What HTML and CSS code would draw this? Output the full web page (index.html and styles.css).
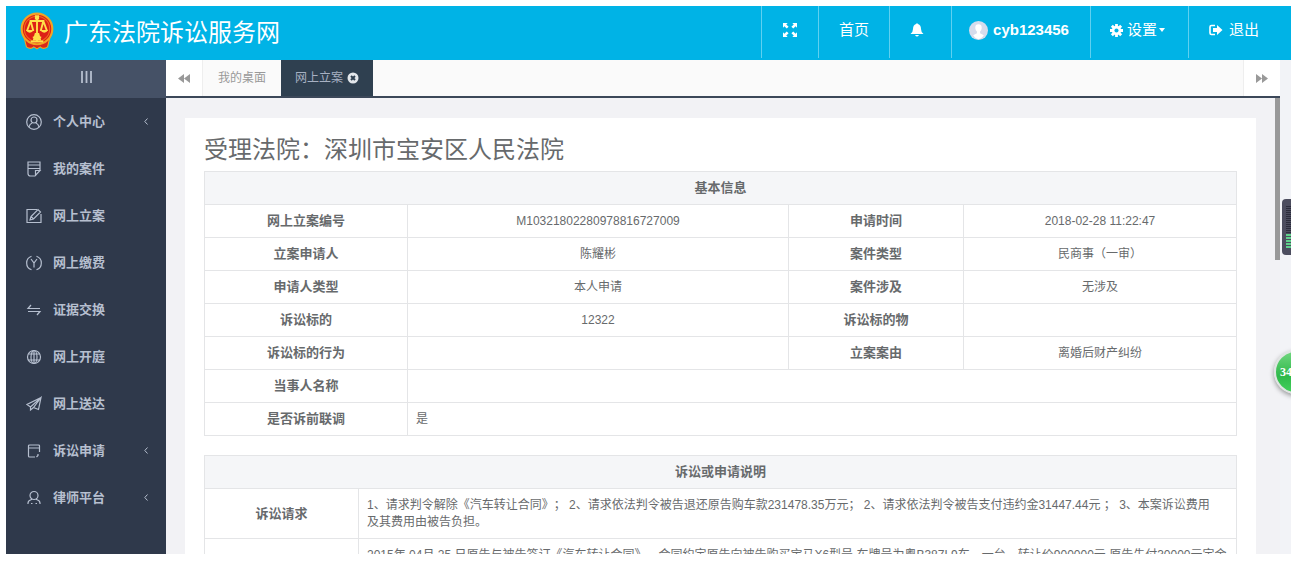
FILE: index.html
```html
<!DOCTYPE html>
<html lang="zh-CN">
<head>
<meta charset="utf-8">
<title>广东法院诉讼服务网</title>
<link rel="stylesheet" href="styles.css">
</head>
<body>
<div class="app">
  <header class="header">
    <div class="brand">
      <svg class="emblem" viewBox="0 0 32 36" aria-hidden="true">
        <path d="M4 25 L6 33 Q10 36 13 33 L16 35 L19 33 Q22 36 26 33 L28 25Z" fill="#d8261c" stroke="#f0a51e" stroke-width="1"/>
        <circle cx="16" cy="16" r="14.500" fill="#dd2016" stroke="#f2a324" stroke-width="2"/>
        <circle cx="16" cy="16" r="12" fill="none" stroke="#f06a1e" stroke-width="1"/>
        <g fill="none" stroke="#ffdf4a" stroke-width="1.800">
          <path d="M16 4V28M9 8.500H23M10 8.500L6.500 18M10 8.500L12.500 18M22 8.500L19.500 18M22 8.500L25.500 18M12 24H20M10 28H22"/>
        </g>
        <path d="M5.500 17H13Q9 22.500 5.500 17ZM19 17H26.500Q23 22.500 19 17ZM14 3H18V7H14ZM14 20L18 20L20 27H12Z" fill="#ffdf4a"/>
      </svg>
      <h1 class="site-title">广东法院诉讼服务网</h1>
    </div>
    <nav class="top-nav">
      <button class="top-item" type="button" aria-label="全屏">
        <svg class="icon-expand" viewBox="0 0 15 15"><path fill="currentColor" d="M0 0H5L3.500 1.500 6 4 4 6 1.500 3.500 0 5ZM15 0V5L13.500 3.500 11 6 9 4 11.500 1.500 10 0ZM0 15V10L1.500 11.500 4 9 6 11 3.500 13.500 5 15ZM15 15H10L11.500 13.500 9 11 11 9 13.500 11.500 15 10Z"/></svg>
      </button>
      <a class="top-item" href="#">首页</a>
      <button class="top-item" type="button" aria-label="通知">
        <svg class="icon-bell" viewBox="0 0 14 14"><path fill="currentColor" d="M6 1Q7-.5 8 1Q11 2 11 6Q11 9 13.500 11H.5Q3 9 3 6Q3 2 6 1ZM5 12H9Q7 15 5 12Z"/></svg>
      </button>
      <a class="top-item user" href="#">
        <svg class="avatar" viewBox="0 0 18 18"><circle cx="9" cy="9" r="9" fill="#d5dcec"/><path fill="#fff" d="M9 3Q12.500 3 12 7Q11.800 9 10.500 10V11.500L14 13.500Q12 17 9 17T4 13.500L7.500 11.500V10Q6.200 9 6 7Q5.500 3 9 3Z"/></svg>
        <span>cyb123456</span>
      </a>
      <button class="top-item settings" type="button">
        <svg class="icon-gear" viewBox="0 0 14 14"><g stroke="currentColor" stroke-width="3"><path d="M7 0V14M0 7H14M2 2L12 12M12 2L2 12"/></g><circle cx="7" cy="7" r="5" fill="currentColor"/><circle cx="7" cy="7" r="2.200" fill="#00b3e6"/></svg>
        <span>设置</span>
        <svg class="icon-caret" viewBox="0 0 6 4"><path fill="currentColor" d="M0 0H6L3 4Z"/></svg>
      </button>
      <a class="top-item logout" href="#">
        <svg class="icon-exit" viewBox="0 0 14 12"><path d="M6 1.500H2.500Q1 1.500 1 3V9Q1 10.500 2.500 10.500H6" fill="none" stroke="currentColor" stroke-width="1.600"/><path fill="currentColor" d="M4 4H8V1L13.500 6 8 11V8H4Z"/></svg>
        <span>退出</span>
      </a>
    </nav>
  </header>
  <div class="body">
    <aside class="sidebar">
      <button class="toggle" type="button" aria-label="菜单">
        <svg class="icon-bars" viewBox="0 0 11 12"><path d="M1 0V12M5.500 0V12M10 0V12" stroke="currentColor" stroke-width="1.800"/></svg>
      </button>
      <nav class="menu">
        <a class="menu-item" href="#"><svg class="menu-icon" viewBox="0 0 16 16"><circle cx="8" cy="8" r="7.300"/><circle cx="8" cy="6" r="3"/><path d="M3 13Q3.500 10 6.300 8.700M13 13Q12.500 10 9.700 8.700"/></svg><span>个人中心</span><svg class="chevron" viewBox="0 0 4 7"><path d="M3.500.5L.8 3.500 3.500 6.500"/></svg></a>
        <a class="menu-item" href="#"><svg class="menu-icon" viewBox="0 0 16 16"><path d="M14 9.500V1H2V12.500Q2 15 4.500 15H9L14 9.500H9.500V15M2 4H14M2 7.500H14"/></svg><span>我的案件</span></a>
        <a class="menu-item" href="#"><svg class="menu-icon" viewBox="0 0 16 16"><path d="M11 1.500H1V14.500H15V6M4 12L5 8.500 12 1.500 14.500 4 7.500 11ZM5 8.500L7.500 11"/></svg><span>网上立案</span></a>
        <a class="menu-item" href="#"><svg class="menu-icon" viewBox="0 0 16 16"><path d="M5.500 1.200A7.200 7.200 0 0 0 5.500 14.800M10.500 1.200A7.200 7.200 0 0 1 10.500 14.800M5 4L8 8 11 4M8 8V12.500"/></svg><span>网上缴费</span></a>
        <a class="menu-item" href="#"><svg class="menu-icon" viewBox="0 0 16 16"><path d="M5 3L2 6.500H14M2 9.500H14L11 13"/></svg><span>证据交换</span></a>
        <a class="menu-item" href="#"><svg class="menu-icon" viewBox="0 0 16 16"><circle cx="8" cy="8" r="6.500"/><ellipse cx="8" cy="8" rx="3" ry="6.500"/><path d="M8 1.500V14.500M2.500 5H13.500M2.500 11H13.500"/></svg><span>网上开庭</span></a>
        <a class="menu-item" href="#"><svg class="menu-icon" viewBox="0 0 16 16"><path d="M15 1.500L1 8.500 4.500 11 15 1.500 12.500 13.500 7.500 11.500M4.500 11V14L7.500 11.500 15 1.500"/></svg><span>网上送达</span></a>
        <a class="menu-item" href="#"><svg class="menu-icon" viewBox="0 0 16 16"><path d="M13.500 9V3Q13.500 2 12.500 2H3.500Q2.500 2 2.500 3V13Q2.500 14 3.500 14H9M2.500 5H13.500M12 11V12.500L10.500 14"/></svg><span>诉讼申请</span><svg class="chevron" viewBox="0 0 4 7"><path d="M3.500.5L.8 3.500 3.500 6.500"/></svg></a>
        <a class="menu-item" href="#"><svg class="menu-icon" viewBox="0 0 16 16"><circle cx="8" cy="5.500" r="4"/><path d="M2 14V13Q2 10.500 5.500 9.500L5.500 8.500M14 14V13Q14 10.500 10.500 9.500L10.500 8.500M5 13.500H6.500M9.500 13.500H11"/></svg><span>律师平台</span><svg class="chevron" viewBox="0 0 4 7"><path d="M3.500.5L.8 3.500 3.500 6.500"/></svg></a>
      </nav>
    </aside>
    <main class="main">
      <div class="tabs">
        <button class="tab-arrow" type="button" aria-label="向左"><svg class="icon-double" viewBox="0 0 12 9"><path fill="currentColor" d="M6 0V9L0 4.500ZM12 0V9L6 4.500Z"/></svg></button>
        <a class="tab" href="#">我的桌面</a>
        <a class="tab active" href="#">网上立案<svg class="icon-close" viewBox="0 0 12 12"><circle cx="6" cy="6" r="5.500" fill="#e3e7eb"/><path d="M4 4L8 8M8 4L4 8" stroke="#2f4050" stroke-width="2"/></svg></a>
        <button class="tab-arrow last" type="button" aria-label="向右"><svg class="icon-double" viewBox="0 0 12 9"><path fill="currentColor" d="M0 0L6 4.500 0 9ZM6 0L12 4.500 6 9Z"/></svg></button>
      </div>
      <div class="content">
        <section class="card">
          <h2 class="court">受理法院：深圳市宝安区人民法院</h2>
          <table class="info">
            <colgroup><col class="c-label"><col><col class="c-label2"><col class="c-value2"></colgroup>
            <thead><tr><th colspan="4">基本信息</th></tr></thead>
            <tbody>
              <tr><th>网上立案编号</th><td>M10321802280978816727009</td><th>申请时间</th><td>2018-02-28 11:22:47</td></tr>
              <tr><th>立案申请人</th><td>陈耀彬</td><th>案件类型</th><td>民商事（一审）</td></tr>
              <tr><th>申请人类型</th><td>本人申请</td><th>案件涉及</th><td>无涉及</td></tr>
              <tr><th>诉讼标的</th><td>12322</td><th>诉讼标的物</th><td></td></tr>
              <tr><th>诉讼标的行为</th><td></td><th>立案案由</th><td>离婚后财产纠纷</td></tr>
              <tr><th>当事人名称</th><td colspan="3"></td></tr>
              <tr><th>是否诉前联调</th><td class="text" colspan="3">是</td></tr>
            </tbody>
          </table>
          <table class="info">
            <colgroup><col class="c-side"><col></colgroup>
            <thead><tr><th colspan="2">诉讼或申请说明</th></tr></thead>
            <tbody>
              <tr><th>诉讼请求</th><td class="text">1、请求判令解除《汽车转让合同》； 2、请求依法判令被告退还原告购车款231478.35万元； 2、请求依法判令被告支付违约金31447.44元 ； 3、本案诉讼费用<br>及其费用由被告负担。</td></tr>
              <tr><th></th><td class="text">2015年 04月 25 日原告与被告签订《汽车转让合同》，合同约定原告向被告购买宝马X6型号,车牌号为粤B387L9车，一台，转让价900000元,原告先付30000元定金</td></tr>
            </tbody>
          </table>
        </section>
      </div>
    </main>
    <div class="gutter"></div>
  </div>
  <div class="scroll-thumb"></div>
  <div class="meter"><span class="meter-off"></span><span class="meter-on"></span></div>
  <div class="ball">34</div>
</div>
</body>
</html>
```
FILE: styles.css
```css
* { box-sizing: border-box; }
body {
  margin: 0;
  padding: 6px 6px 25px;
  height: 100vh;
  background: #fff;
  font: 12px/17px "Liberation Sans", "Noto Sans CJK SC", sans-serif;
  color: #676a6c;
  text-spacing-trim: space-all;
}
a { color: inherit; text-decoration: none; }
button { border: 0; padding: 0; background: none; font: inherit; color: inherit; }
svg { display: block; flex: none; }

.app { position: relative; height: 100%; display: flex; flex-direction: column; overflow: hidden; }

.header { flex: none; height: 54px; display: flex; justify-content: space-between; background: #00b3e6; color: #fff; }
.brand { display: flex; align-items: center; gap: 10px; padding-left: 14px; }
.emblem { width: 34px; height: 38px; margin-bottom: 4px; }
.site-title { margin: 0; font-size: 24px; line-height: 32px; font-weight: 400; }
.top-nav { display: flex; height: 52px; font-size: 15px; line-height: 20px; }
.top-item { display: flex; align-items: center; padding: 0 20px; border-left: 1px solid #5fd0f0; padding-bottom: 4px; }
.top-item.user { padding-left: 17px; padding-right: 21px; gap: 5px; font-weight: 700; }
.top-item.settings { gap: 4px; padding-left: 19px; padding-right: 23px; }
.top-item.settings .icon-caret { margin-left: -2px; }
.top-item.logout { gap: 6px; padding-right: 32px; }
.icon-expand { width: 16px; height: 14px; }
.icon-bell { width: 14px; height: 14px; margin: 0 7px 0 0; }
.avatar { width: 19px; height: 19px; }
.icon-gear { width: 13px; height: 13px; }
.icon-caret { width: 6px; height: 4px; }
.icon-exit { width: 14px; height: 12px; }

.body { flex: 1; min-height: 0; display: flex; }
.sidebar { flex: none; width: 160px; background: #2f394b; color: #b6bfcf; }
.toggle { width: 100%; height: 38px; display: flex; align-items: center; justify-content: center; background: #455166; padding-bottom: 4px; }
.icon-bars { width: 11px; height: 12px; }
.menu-item { display: flex; align-items: center; height: 47px; padding: 0 18px 0 20px; gap: 11px; font-size: 13px; font-weight: 700; }
.menu-icon { width: 16px; height: 16px; fill: none; stroke: currentColor; stroke-width: 1.2; }
.chevron { width: 4px; height: 7px; margin-left: auto; fill: none; stroke: currentColor; stroke-width: 1; }

.main { flex: 1; min-width: 0; display: flex; flex-direction: column; background: #f2f2f5; }
.gutter { flex: none; width: 11px; background: #f2f3f7; }
.tabs { flex: none; height: 38px; display: flex; background: #fafafa; border-bottom: 2px solid #3c4859; color: #999; }
.tab-arrow { width: 37px; display: flex; align-items: center; justify-content: center; background: #fff; border-right: 1px solid #eee; }
.tab-arrow.last { margin-left: auto; border-right: 0; border-left: 1px solid #eee; }
.icon-double { width: 12px; height: 9px; }
.tab { display: flex; align-items: center; gap: 4px; padding: 0 15px; }
.tab.active { padding: 0 14px; background: #2f4050; color: #a7b1c2; }
.icon-close { width: 12px; height: 12px; }

.content { flex: 1; min-height: 0; overflow: hidden; padding: 20px 24px 0 19px; }
.card { background: #fff; padding: 16px 19px 20px; }
.court { margin: 0 0 5px; font-size: 24px; line-height: 32px; font-weight: 400; }
.info { width: 100%; table-layout: fixed; border-collapse: collapse; margin-bottom: 19px; }
.info th, .info td { height: 33px; padding: 8px 8px 7px; border: 1px solid #e4e5e7; text-align: center; }
.info th { padding: 7px 8px 8px; font-size: 13px; font-weight: 700; }
.info thead th { background: #f5f6f8; }
.info td.text { text-align: left; }
.c-label { width: 203px; }
.c-label2 { width: 175px; }
.c-value2 { width: 273px; }
.c-side { width: 154px; }

.scroll-thumb { position: absolute; right: 11px; top: 92px; width: 5px; height: 162px; background: #999; }
.meter { position: absolute; right: -4px; top: 193px; width: 13px; height: 56px; padding: 7px 0 0 4px; border-radius: 4px; background: #4c4d5f; }
.meter span { display: block; width: 5px; }
.meter-off { height: 28px; background: repeating-linear-gradient(#2c2d3c 0 1px, #4c4d5f 1px 2px); }
.meter-on { height: 15px; background: repeating-linear-gradient(#5fd08c 0 2px, #4c4d5f 2px 3px); }
.ball { position: absolute; right: -27px; top: 344px; width: 44px; height: 44px; padding-left: 4px; border: 2px solid #dfe5e2; border-radius: 50%; background: linear-gradient(#6fd67f, #2fb94a 60%, #43d05c); box-shadow: 0 2px 5px #0006; color: #fff; font: 700 12px/40px "Liberation Serif", serif; }
```
